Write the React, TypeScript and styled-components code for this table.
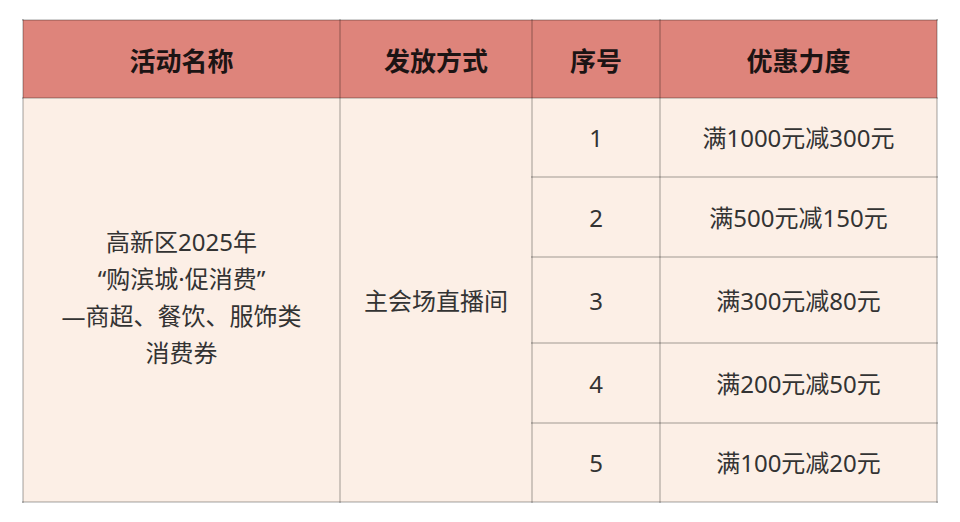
import React from "react";
import styled, { createGlobalStyle } from "styled-components";

const GlobalStyle = createGlobalStyle`
  html, body { margin: 0; padding: 0; background: #ffffff; }
  body { font-family: "Noto Sans", "Noto Sans CJK SC", sans-serif; }
`;

const Page = styled.div`
  padding: 19px 0 0 22px;
  width: 960px;
  height: 522px;
  box-sizing: border-box;
`;

const Table = styled.table`
  border-collapse: collapse;
  table-layout: fixed;
  width: 914px;
  border: 2px solid rgba(0, 0, 0, 0.18);
`;

const HeadCell = styled.th<{ $w: number }>`
  width: ${(p) => p.$w}px;
  height: 78px;
  padding: 0;
  background: #de847b;
  color: #1c1414;
  font-family: "Noto Sans CJK SC", sans-serif;
  font-size: 26px;
  font-weight: 700;
  text-align: center;
  vertical-align: middle;
  border: 2px solid rgba(0, 0, 0, 0.18);
  box-sizing: border-box;
`;

const Row = styled.tr<{ $h: number }>`
  height: ${(p) => p.$h}px;
`;

const Cell = styled.td`
  padding: 0;
  background: #fcefe6;
  color: #333333;
  font-size: 24px;
  line-height: 37px;
  text-align: center;
  vertical-align: middle;
  border: 2px solid rgba(0, 0, 0, 0.18);
`;

const NameCell = styled(Cell)`
  padding-bottom: 6px;
`;

const headers = [
  { t: "活动名称", w: 317 },
  { t: "发放方式", w: 192 },
  { t: "序号", w: 128 },
  { t: "优惠力度", w: 277 },
];

const rows = [
  { n: "1", d: "满1000元减300元", h: 79 },
  { n: "2", d: "满500元减150元", h: 80 },
  { n: "3", d: "满300元减80元", h: 86 },
  { n: "4", d: "满200元减50元", h: 80 },
  { n: "5", d: "满100元减20元", h: 79 },
];

export default function App() {
  return (
    <>
      <GlobalStyle />
      <Page>
        <Table>
          <thead>
            <tr>
              {headers.map((h) => (
                <HeadCell key={h.t} $w={h.w}>
                  {h.t}
                </HeadCell>
              ))}
            </tr>
          </thead>
          <tbody>
            {rows.map((r, i) => (
              <Row key={r.n} $h={r.h}>
                {i === 0 && (
                  <>
                    <NameCell rowSpan={5}>
                      高新区2025年
                      <br />
                      “购滨城·促消费”
                      <br />
                      —商超、餐饮、服饰类
                      <br />
                      消费券
                    </NameCell>
                    <Cell rowSpan={5}>主会场直播间</Cell>
                  </>
                )}
                <Cell>{r.n}</Cell>
                <Cell>{r.d}</Cell>
              </Row>
            ))}
          </tbody>
        </Table>
      </Page>
    </>
  );
}
